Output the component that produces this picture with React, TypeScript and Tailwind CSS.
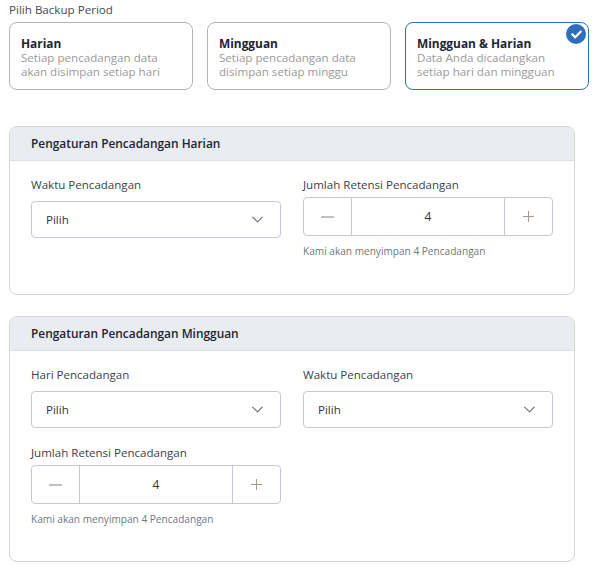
import { FaCheck } from "react-icons/fa";
import { FiChevronDown } from "react-icons/fi";

interface PeriodProps {
  title: string;
  desc: string;
  active?: boolean;
}

function PeriodCard({ title, desc, active }: PeriodProps) {
  return (
    <div
      className={`relative h-[68px] w-[184px] rounded-lg border bg-white pl-[11px] pr-[16px] pt-[12px] ${
        active ? "border-[#2f6fb9]" : "border-[#b4b4b4]"
      }`}
    >
      <div className="text-[11.9px] font-bold leading-[16px] text-[#1c2536]">{title}</div>
      <div className="text-[11.6px] leading-[14px] text-[#9a9a9a]">{desc}</div>
      {active && (
        <div className="absolute right-[2px] top-px flex h-[20px] w-[20px] items-center justify-center rounded-full bg-[#2f6fb9]">
          <FaCheck className="text-[11px] text-white" />
        </div>
      )}
    </div>
  );
}

function Field({ label, children }: { label: string; children: React.ReactNode }) {
  return (
    <div className="w-[250px]">
      <div className="h-[18px] text-[11.55px] leading-[18px] text-[#3a3f4b] whitespace-nowrap">{label}</div>
      {children}
    </div>
  );
}

function SelectBox() {
  return (
    <div className="mt-[7px] flex h-[37px] items-center justify-between rounded border border-[#c8c5d8] pl-[14px] pr-[13px] text-[11.5px] text-[#30343c]">
      <span>Pilih</span>
      <FiChevronDown className="text-[19px] text-[#777] [stroke-width:1.6]" />
    </div>
  );
}

function Stepper() {
  return (
    <div className="pt-[3px]">
      <div className="flex h-[39px] items-center rounded border border-[#c8c5d8] text-[#30343c]">
        <div className="flex h-full w-[48px] items-center justify-center border-r border-[#c8c5d8]">
          <div className="h-[2px] w-[13px] bg-[#c0c0c0]" />
        </div>
        <div className="flex-1 text-center text-[12px]">4</div>
        <div className="relative flex h-full w-[48px] items-center justify-center border-l border-[#c8c5d8]">
          <div className="h-px w-[11px] bg-[#a59a8c]" />
          <div className="absolute h-[11px] w-px bg-[#a59a8c]" />
        </div>
      </div>
      <div className="mt-[8px] text-[10.1px] leading-[14px] text-[#6f7782] whitespace-nowrap">Kami akan menyimpan 4 Pencadangan</div>
    </div>
  );
}

function Panel({ title, className, children }: { title: string; className: string; children: React.ReactNode }) {
  return (
    <div className={`w-[566px] overflow-hidden rounded-lg border border-[#d4d4d4] bg-white ${className}`}>
      <div className="flex h-[34px] items-center border-b border-[#dcdfe4] bg-[#e9ecf1] pl-[21px] pt-px text-[11.9px] font-semibold text-[#1c2536]">
        {title}
      </div>
      <div className="px-[21px] pt-[15px]">{children}</div>
    </div>
  );
}

export default function App() {
  return (
    <div className="min-h-[577px] bg-white pl-[9px] font-['Open_Sans',sans-serif]">
      <div className="pt-[1px] text-[11.6px] leading-[17px] text-[#454a54]">Pilih Backup Period</div>
      <div className="mt-[4px] flex gap-[14px]">
        <PeriodCard title="Harian" desc="Setiap pencadangan data akan disimpan setiap hari" />
        <PeriodCard title="Mingguan" desc="Setiap pencadangan data disimpan setiap minggu" />
        <PeriodCard title="Mingguan & Harian" desc="Data Anda dicadangkan setiap hari dan mingguan" active />
      </div>

      <Panel title="Pengaturan Pencadangan Harian" className="mt-[36px] h-[169px]">
        <div className="flex gap-[22px]">
          <Field label="Waktu Pencadangan">
            <SelectBox />
          </Field>
          <Field label="Jumlah Retensi Pencadangan">
            <Stepper />
          </Field>
        </div>
      </Panel>

      <Panel title="Pengaturan Pencadangan Mingguan" className="mt-[21px] h-[246px]">
        <div className="flex gap-[22px]">
          <Field label="Hari Pencadangan">
            <SelectBox />
          </Field>
          <Field label="Waktu Pencadangan">
            <SelectBox />
          </Field>
        </div>
        <div className="mt-[16px]">
          <Field label="Jumlah Retensi Pencadangan">
            <Stepper />
          </Field>
        </div>
      </Panel>
    </div>
  );
}
